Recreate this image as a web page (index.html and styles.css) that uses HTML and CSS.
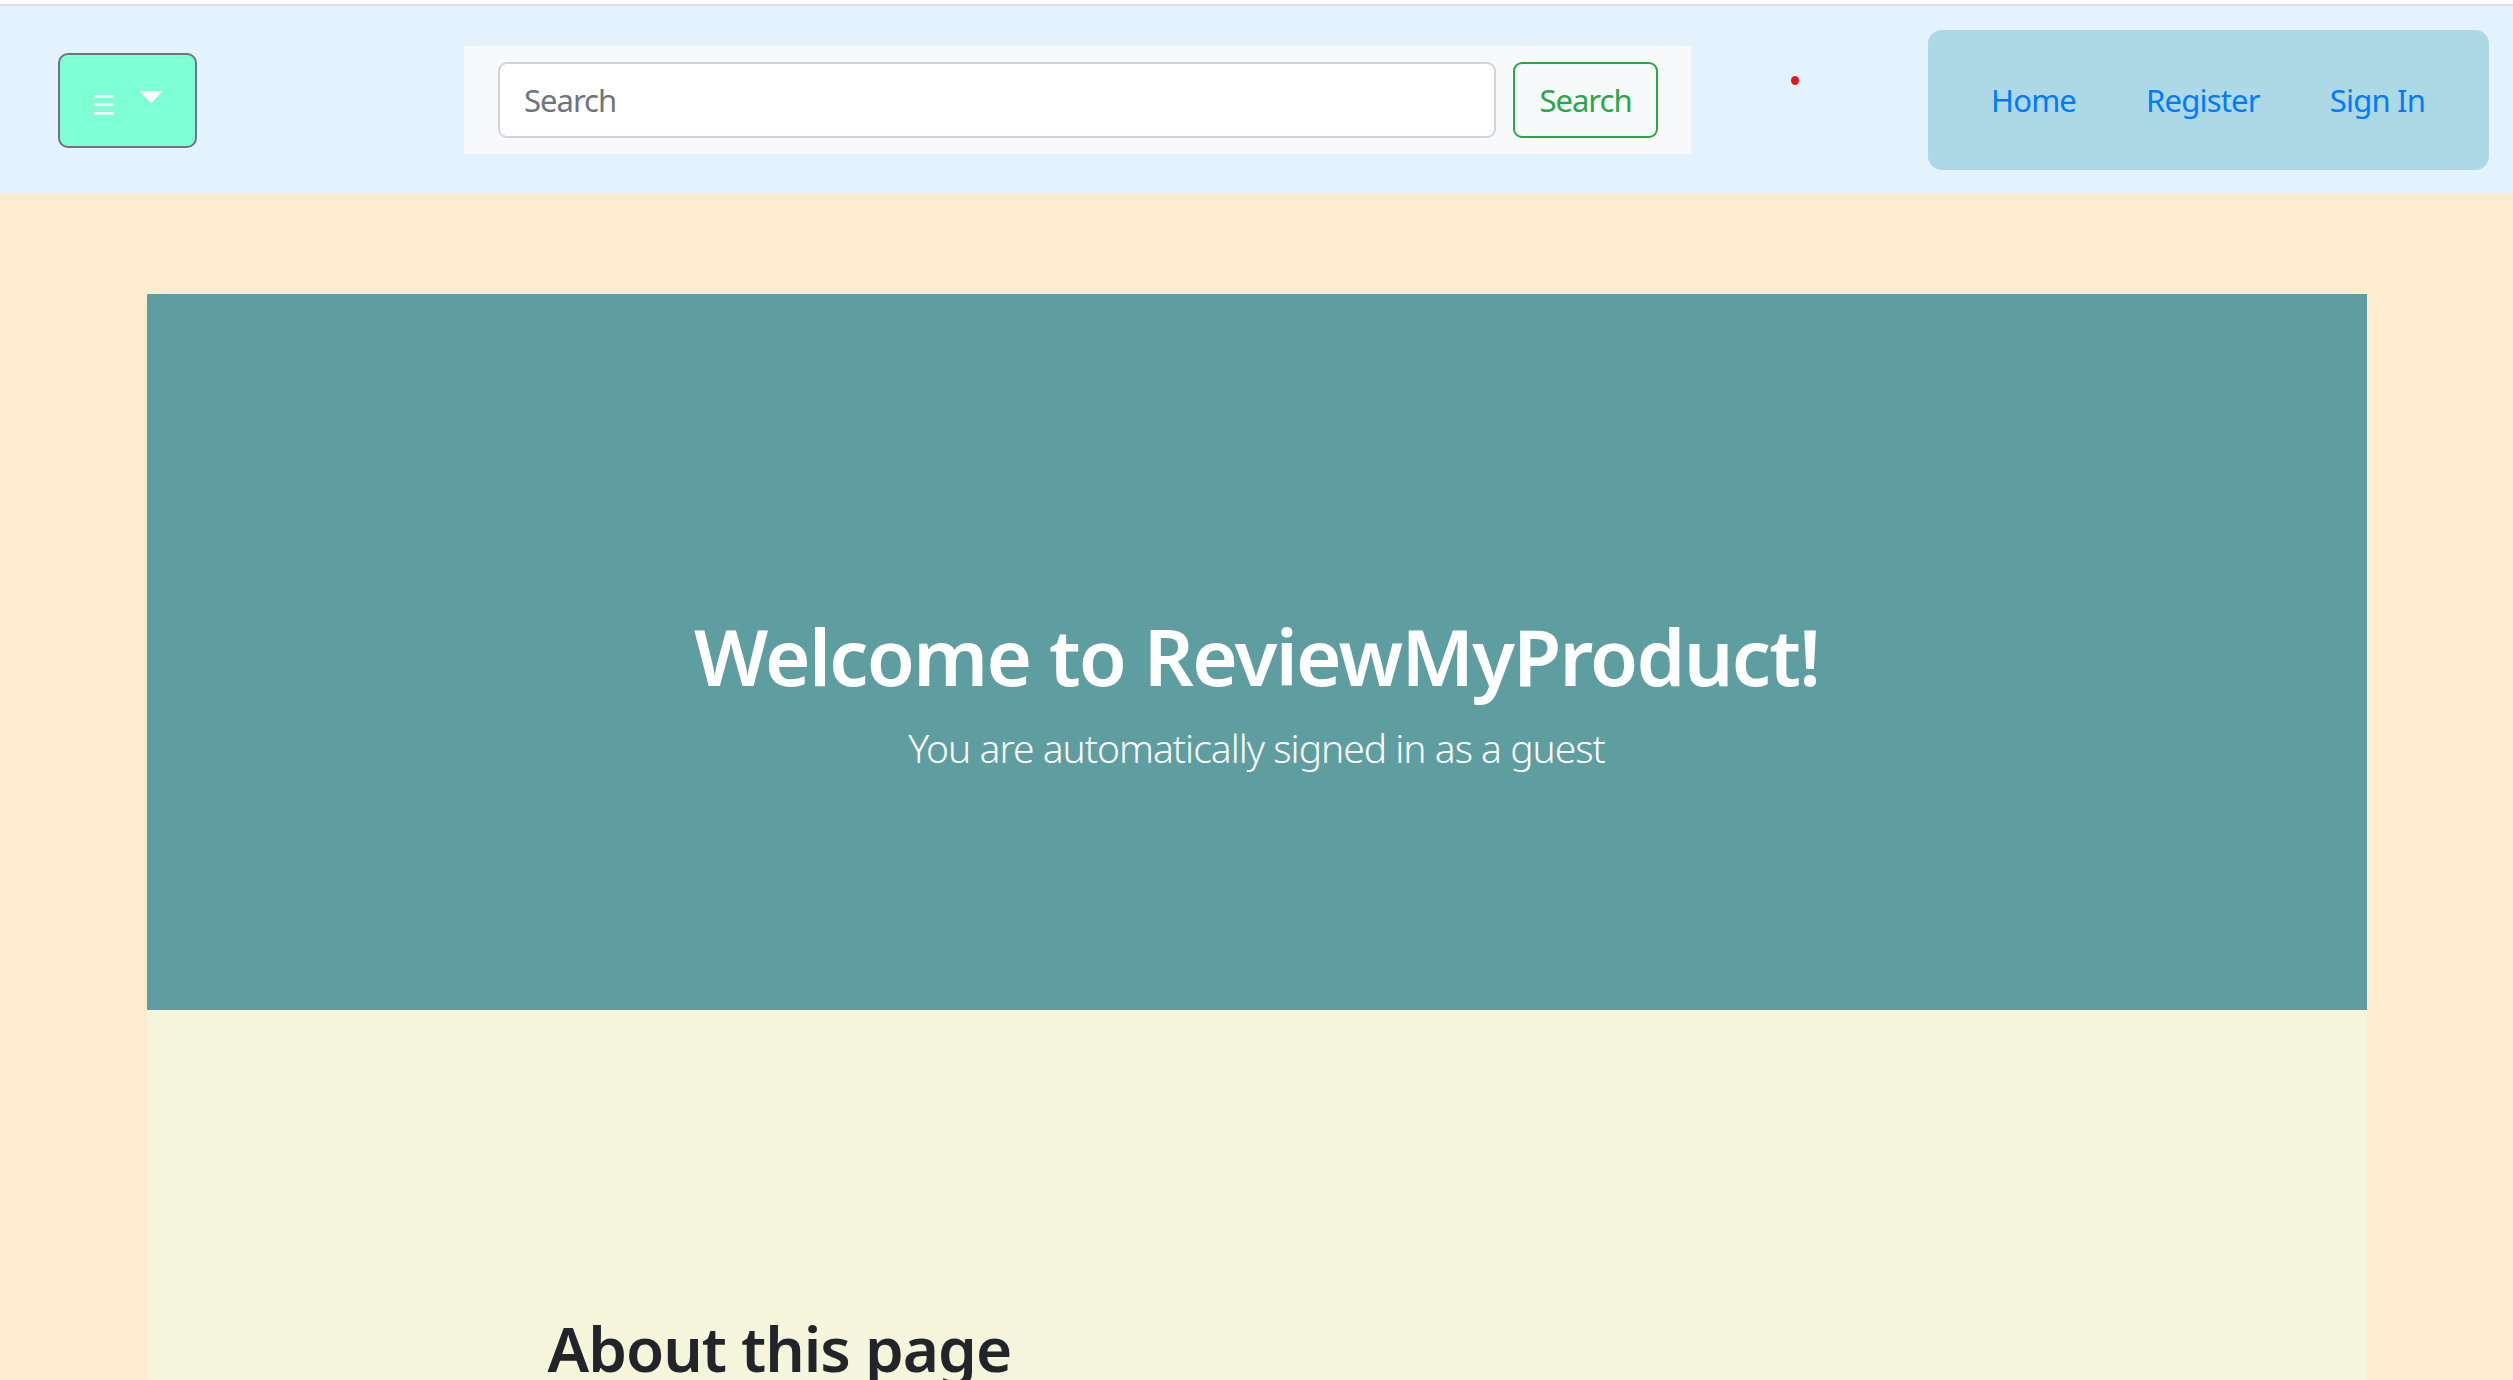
FILE: index.html
```html
<!DOCTYPE html>
<html lang="en">
<head>
<meta charset="utf-8">
<title>ReviewMyProduct</title>
<link rel="stylesheet" href="styles.css">
</head>
<body>
<div class="top-strip"><div class="top-line"></div></div>
<nav class="navbar">
  <button class="menu-btn" type="button" aria-label="Menu">
    <svg class="burger" width="20" height="20" viewBox="0 0 20 20" aria-hidden="true">
      <rect x="0" y="0" width="20" height="2.5" fill="#fff"/>
      <rect x="0" y="8.5" width="20" height="2.5" fill="#fff"/>
      <rect x="0" y="17" width="20" height="2.5" fill="#fff"/>
    </svg>
    <span class="caret"></span>
  </button>
  <form class="search-form">
    <input class="search-input" type="search" placeholder="Search">
    <button class="search-btn" type="button">Search</button>
  </form>
  <span class="dot"></span>
  <div class="nav-box">
    <a class="nav-link" href="#">Home</a>
    <a class="nav-link" href="#">Register</a>
    <a class="nav-link" href="#">Sign In</a>
  </div>
</nav>
<main class="container">
  <section class="hero">
    <h1 class="hero-title">Welcome to ReviewMyProduct!</h1>
    <p class="hero-lead">You are automatically signed in as a guest</p>
  </section>
  <section class="about">
    <h2 class="about-title">About this page</h2>
  </section>
</main>
</body>
</html>
```
FILE: styles.css
```css
* { box-sizing: border-box; }
html, body { margin: 0; padding: 0; }
body {
  background: #ffebcd;
  font-family: "Noto Sans", "Open Sans", sans-serif;
  color: #212529;
  overflow: hidden;
}
.top-strip { background: #fff; padding-top: 4px; }
.top-line { height: 2px; background: #dcdfe4; }
.navbar {
  height: 188px;
  background: #e3f2fd;
  display: flex;
  align-items: center;
  padding: 0 24px 0 58px;
}
.menu-btn {
  width: 139px;
  height: 95px;
  background: #7fffd4;
  border: 2px solid #6c757d;
  border-radius: 10px;
  display: flex;
  align-items: center;
  justify-content: center;
  gap: 25px;
  padding: 0 0 0 2px;
  cursor: pointer;
}
.burger { margin-top: 10px; display: block; }
.caret {
  width: 0; height: 0;
  border-top: 12px solid #fff;
  border-left: 12px solid transparent;
  border-right: 12px solid transparent;
  margin-top: -7px;
}
.search-form {
  margin-left: 267px;
  width: 1227px;
  height: 108px;
  background: #f8f9fa;
  display: flex;
  align-items: center;
  gap: 17px;
  padding: 0 33px 0 34px;
}
.search-input {
  flex: 1;
  height: 76px;
  border: 2px solid #ced4da;
  border-radius: 9px;
  background: #fff;
  font-family: inherit;
  font-size: 31px;
  letter-spacing: -1px;
  padding: 0 24px;
  color: #495057;
  outline: none;
}
.search-input::placeholder { color: #6c757d; }
.search-btn {
  width: 145px;
  height: 76px;
  border: 2px solid #28a745;
  border-radius: 9px;
  background: transparent;
  color: #28a745;
  font-family: inherit;
  font-size: 31px;
  letter-spacing: -1px;
  padding: 0;
}
.dot {
  width: 8px; height: 9px;
  border-radius: 50%;
  background: #e5161c;
  margin-left: 100px;
  margin-bottom: 39px;
}
.nav-box {
  margin-left: auto;
  width: 561px;
  height: 140px;
  background: #add8e6;
  border-radius: 14px;
  display: flex;
  align-items: center;
  padding: 0 28px;
  white-space: nowrap;
}
.nav-link {
  color: #007bff;
  text-decoration: none;
  font-size: 31px;
  letter-spacing: -0.8px;
  padding: 0 35px;
}
.container {
  width: 2220px;
  margin: 100px auto 0;
}
.hero {
  height: 716px;
  background: #5f9ea0;
  color: #fff;
  text-align: center;
  padding-top: 314px;
}
.hero-title {
  margin: 0;
  font-size: 78px;
  line-height: 96px;
  letter-spacing: -1.7px;
  font-weight: 600;
}
.hero-lead {
  margin: 14px 0 0;
  font-size: 39px;
  line-height: 60px;
  letter-spacing: -1px;
  font-weight: 300;
}
.about {
  background: #f5f5dc;
  min-height: 700px;
  padding: 300px 0 0 401px;
}
.about-title {
  margin: 0;
  font-size: 62px;
  line-height: 77px;
  letter-spacing: -1px;
  font-weight: 600;
}
```
